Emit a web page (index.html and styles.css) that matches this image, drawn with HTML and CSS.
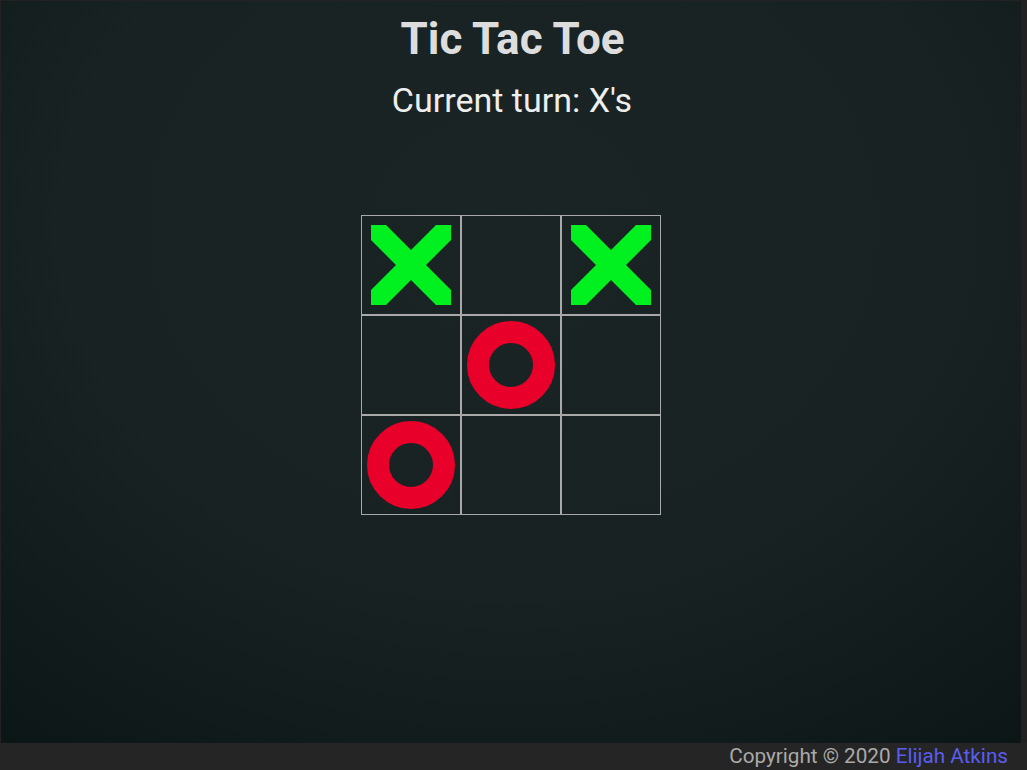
FILE: index.html
```html
<!DOCTYPE html>
<html lang="en">
<head>
<meta charset="utf-8">
<title>Tic Tac Toe</title>
<link rel="stylesheet" href="styles.css">
</head>
<body>
<div class="page">
  <main class="main">
    <h1 class="title">Tic Tac Toe</h1>
    <p class="turn">Current turn: X's</p>
    <div class="board">
      <div class="cell"><svg class="mark" viewBox="0 0 80 80"><polygon class="x" points="0,0 15,0 40,25 65,0 80,0 80,15 55,40 80,65 80,80 65,80 40,55 15,80 0,80 0,65 25,40 0,15"/></svg></div>
      <div class="cell"></div>
      <div class="cell"><svg class="mark" viewBox="0 0 80 80"><polygon class="x" points="0,0 15,0 40,25 65,0 80,0 80,15 55,40 80,65 80,80 65,80 40,55 15,80 0,80 0,65 25,40 0,15"/></svg></div>
      <div class="cell"></div>
      <div class="cell"><svg class="ring" viewBox="0 0 88 88"><circle class="o" cx="44" cy="44" r="33" /></svg></div>
      <div class="cell"></div>
      <div class="cell"><svg class="ring" viewBox="0 0 88 88"><circle class="o" cx="44" cy="44" r="33" /></svg></div>
      <div class="cell"></div>
      <div class="cell"></div>
    </div>
  </main>
  <footer class="footer">Copyright © 2020 <a class="author" href="#">Elijah Atkins</a></footer>
</div>
</body>
</html>
```

FILE: styles.css
```css
html, body {
  margin: 0;
  padding: 0;
  height: 100%;
}

body {
  background: #222222;
  font-family: Roboto, "Liberation Sans", sans-serif;
}

.page {
  height: 100%;
  display: flex;
  flex-direction: column;
  padding: 1px 6px 0 1px;
  box-sizing: border-box;
}

.main {
  flex: 1;
  display: flex;
  flex-direction: column;
  align-items: center;
  background: radial-gradient(ellipse 80% 90% at 50% 30%, #1a2425 0%, #182223 55%, #0c1616 100%);
}

.title {
  margin: 12px 0 0 3px;
  font-size: 44px;
  font-weight: 700;
  line-height: 52px;
  color: #dddddd;
}

.turn {
  margin: 15px 0 0 2px;
  font-size: 34px;
  line-height: 40px;
  color: #eeeeee;
}

.board {
  margin-top: 95px;
  display: grid;
  grid-template-columns: repeat(3, 100px);
  grid-template-rows: repeat(3, 100px);
}

.cell {
  border: 1px solid #a9a9a9;
  display: flex;
  align-items: center;
  justify-content: center;
}

.mark {
  width: 80px;
  height: 80px;
  display: block;
}

.x {
  fill: #00f020;
}

.ring {
  width: 88px;
  height: 88px;
  display: block;
}

.o {
  fill: none;
  stroke: #e8002a;
  stroke-width: 22;
}

.footer {
  height: 27px;
  background: #252525;
  color: #aaaaaa;
  font-size: 20.7px;
  line-height: 27px;
  text-align: right;
  padding-right: 19px;
  margin-right: -6px;
  margin-left: -1px;
}

.author {
  color: #5a5ef0;
  text-decoration: none;
}
```
